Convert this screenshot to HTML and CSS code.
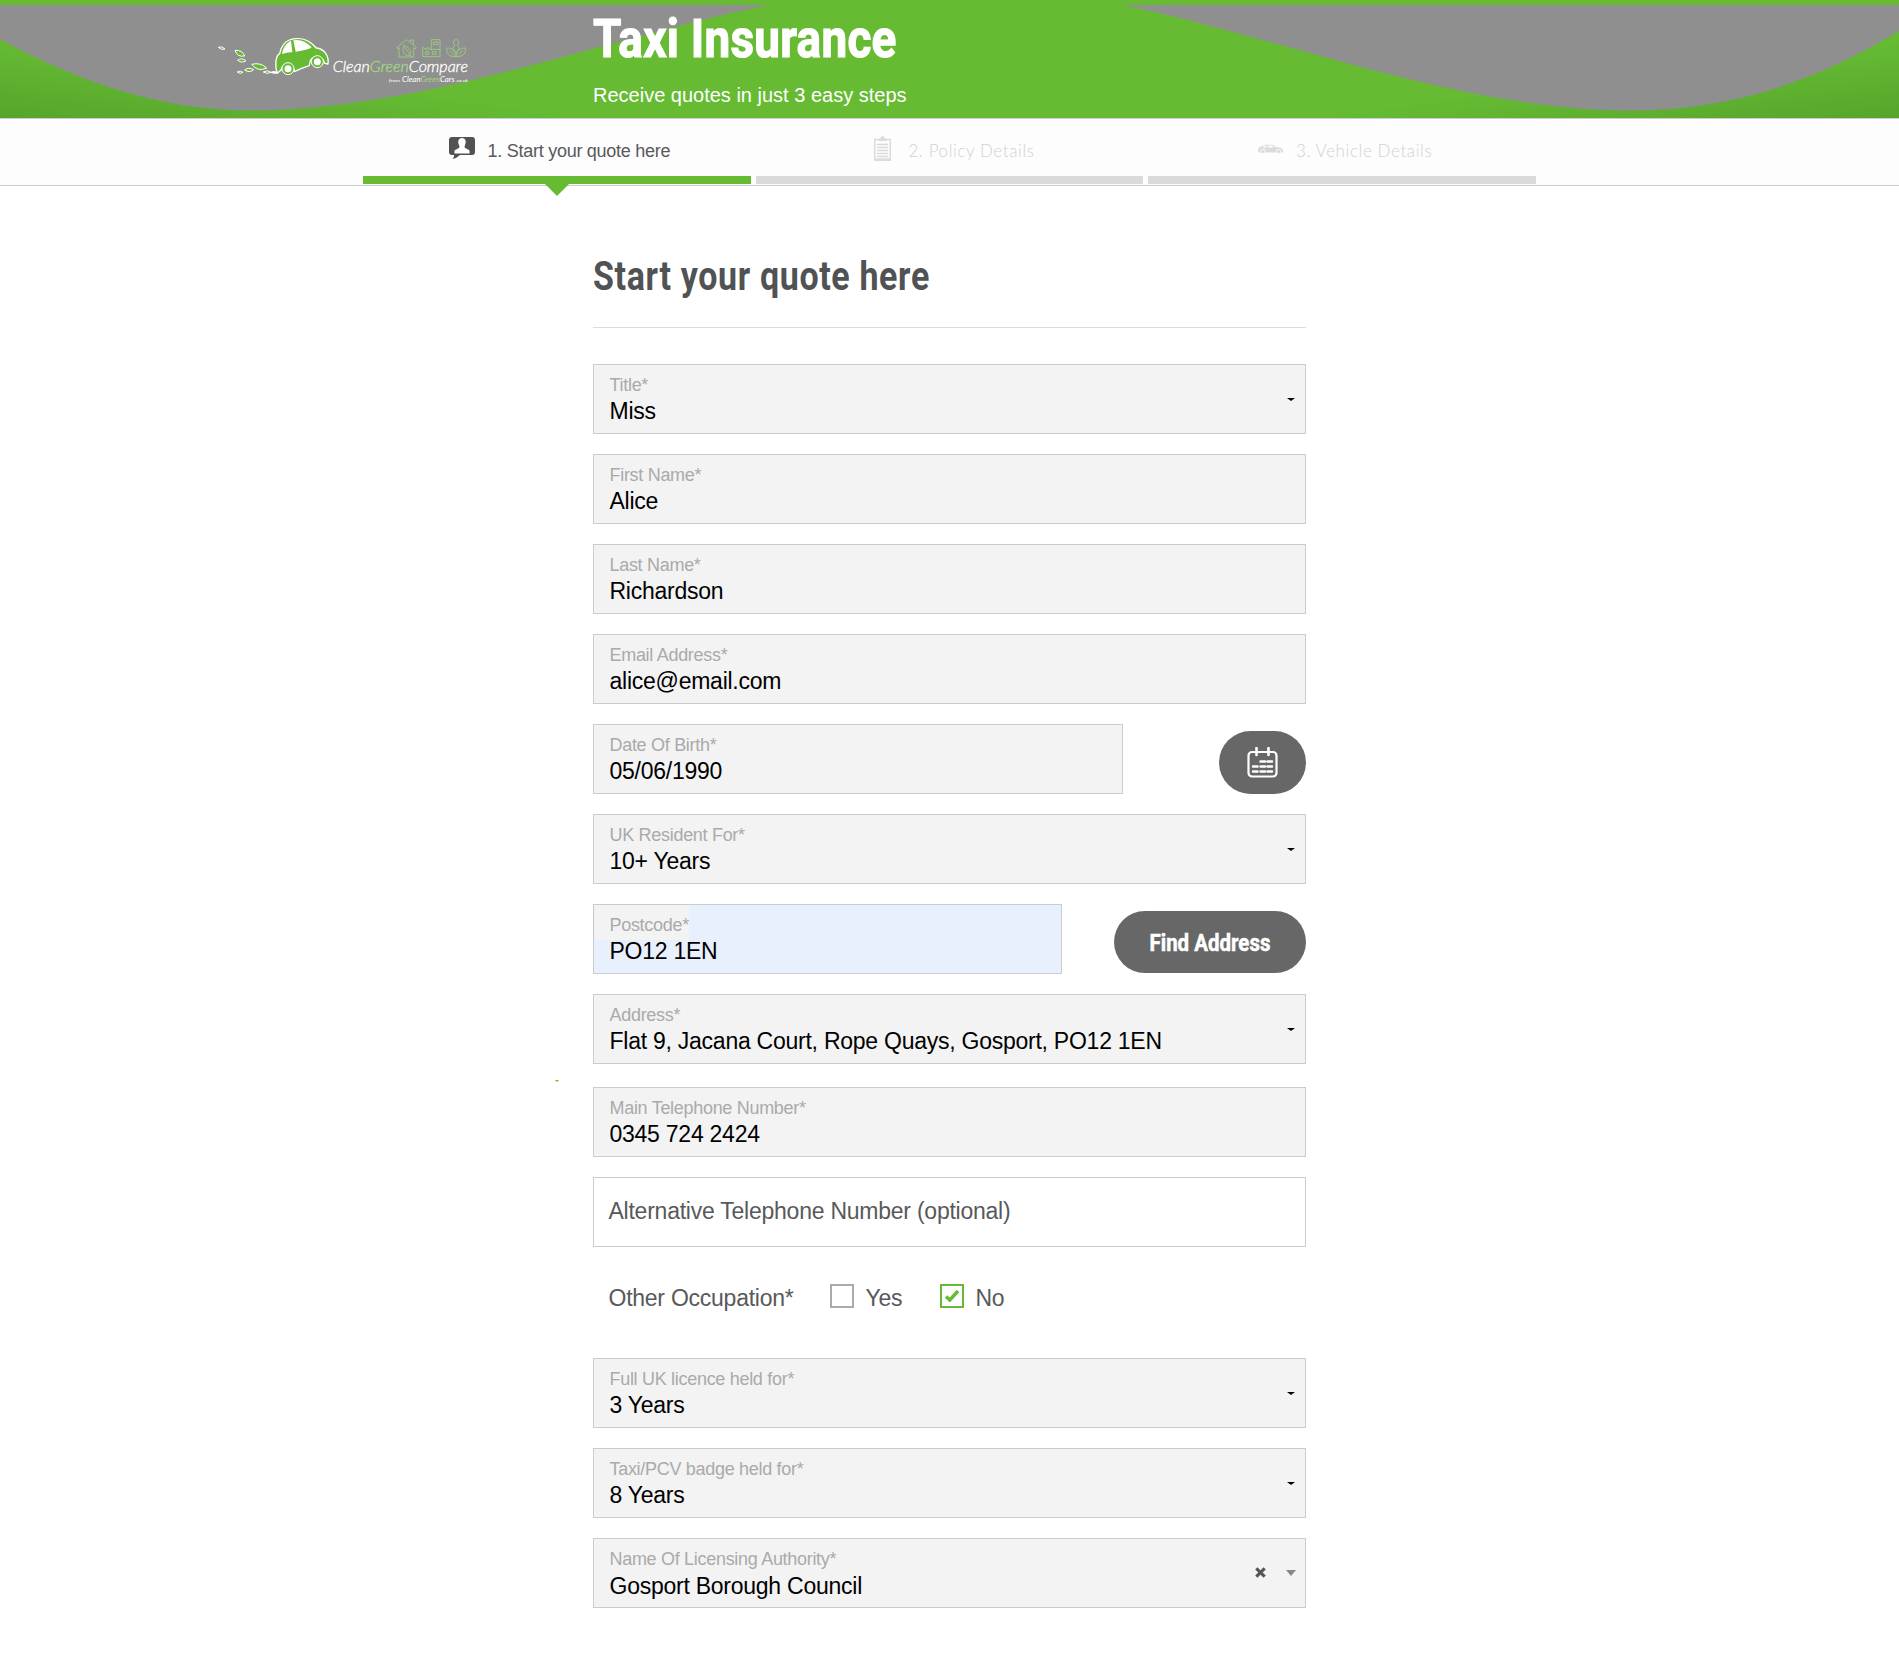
FILE: index.html
```html
<!DOCTYPE html>
<html lang="en">
<head>
<meta charset="utf-8">
<title>Taxi Insurance</title>
<link rel="stylesheet" href="styles.css">
</head>
<body>
<header class="header">
  <svg class="header-bg" viewBox="0 0 1899 118" preserveAspectRatio="none" aria-hidden="true">
    <defs>
      <linearGradient id="gl" gradientUnits="userSpaceOnUse" x1="10" y1="41" x2="0" y2="118"><stop offset="0" stop-color="#66bb33"/><stop offset="1" stop-color="#56a52b"/></linearGradient>
      <linearGradient id="gr" gradientUnits="userSpaceOnUse" x1="1889" y1="41" x2="1899" y2="118"><stop offset="0" stop-color="#66bb33"/><stop offset="1" stop-color="#56a52b"/></linearGradient>
    </defs>
    <rect width="950" height="118" fill="url(#gl)"/>
    <rect x="949" width="950" height="118" fill="url(#gr)"/>
    <path fill="#8f8f8f" d="M0 5V39.5C85 85 165 110.5 250 110.5C420 110.5 600 40 768 5Z"/>
    <path fill="#8f8f8f" d="M1123 5C1290 40 1460 110.5 1632 110.5C1730 110.5 1815 82 1899 31V5Z"/>
  </svg>
  <svg class="logo" viewBox="0 0 870 240" role="img" aria-label="CleanGreenCompare">
    <g fill="#66bb33" stroke="#fff" stroke-width="3">
      <path d="M55 82Q66 77 75 87Q64 91 55 82Z"/>
      <path d="M105 91Q128 90 134 108Q111 112 105 91Z"/>
      <path d="M113 121Q125 112 138 122Q126 131 113 121Z"/>
      <path d="M112 156Q121 150 129 157Q121 164 112 156Z"/>
      <path d="M134 150Q146 140 161 149Q149 160 134 150Z"/>
      <path d="M155 133Q181 126 200 144Q174 157 155 133Z"/>
      <path d="M190 156Q202 148 213 157Q202 164 190 156Z"/>
      <path d="M212 157Q222 151 233 158Q224 163 212 157Z" fill="#fff"/>
    </g>
    <path d="M232 160C224 138 226 108 239 101C243 82 252 66 268 60C296 50 326 58 349 84C370 86 388 105 384 132L374 130C370 110 337 104 330 125L328 137C310 143 299 147 283 155C283 130 251 122 243 150Z" fill="#66bb33" stroke="#fff" stroke-width="4" stroke-linejoin="round"/>
    <path d="M246 102Q250 73 273 62L277 96Q260 97 246 102Z M280 61Q310 56 335 82Q323 91 287 95Z" fill="#fff"/>
    <circle cx="264" cy="146" r="18" fill="#66bb33" stroke="#fff" stroke-width="3"/>
    <circle cx="264" cy="146" r="10.5" fill="#fff"/>
    <circle cx="352" cy="125" r="18" fill="#66bb33" stroke="#fff" stroke-width="3"/>
    <circle cx="352" cy="125" r="10.5" fill="#fff"/>
    <g fill="none" stroke="#9bcf80" stroke-width="2.6" stroke-linejoin="round">
      <path d="M591 82L620 59L649 82L646 87L641 83V111H597V83L594 87ZM631 66V60H640V75"/>
      <path d="M611 76C607 95 610 107 627 106C638 100 632 83 611 76ZM614 82L636 112"/>
      <path d="M668 110V82L681 90V82L694 90V59H720V110ZM700 66H714V74H700ZM677 95H686V103H677ZM697 95H708V103H697ZM694 88H720"/>
      <path d="M768 59C758 59 758 73 765 75C757 79 760 93 768 98C777 93 779 79 772 75C779 73 778 59 768 59ZM768 110C744 111 740 98 740 84C757 83 767 92 768 110ZM768 110C792 111 797 98 797 84C780 83 769 92 768 110ZM749 91L763 106M788 91L774 106"/>
    </g>
    <text class="logo-name" x="398" y="155" textLength="406" lengthAdjust="spacingAndGlyphs">Clean<tspan class="logo-green">Green</tspan>Compare</text>
    <text class="logo-small" x="566" y="186" textLength="34" lengthAdjust="spacingAndGlyphs">from</text>
    <text class="logo-sub" x="606" y="186" textLength="158" lengthAdjust="spacingAndGlyphs">Clean<tspan class="logo-green">Green</tspan>Cars</text>
    <text class="logo-small" x="767" y="186" textLength="37" lengthAdjust="spacingAndGlyphs">.co.uk</text>
  </svg>
  <div class="header-text">
    <h1 class="title">Taxi Insurance</h1>
    <p class="tagline">Receive quotes in just 3 easy steps</p>
  </div>
</header>

<nav class="steps">
  <div class="step step-active">
    <div class="step-label">
      <svg class="ico-person" viewBox="0 0 26 22"><path fill="#505254" d="M3 0H23Q26 0 26 3V15Q26 18 23 18H11Q8 21 3.500 22Q5.500 20 5 18H3Q0 18 0 15V3Q0 0 3 0Z"/><path fill="#fff" d="M13 1C17 1 17.500 5 16 8Q15 10 16 11L20 13Q21 14 20.500 16.500H5.500Q5 14 6 13L10 11Q11 10 10 8C8.500 5 9 1 13 1Z"/></svg>
      <span>1. Start your quote here</span>
    </div>
    <div class="step-bar"></div>
  </div>
  <div class="step">
    <div class="step-label">
      <svg class="ico-clip" viewBox="0 0 17 25"><path fill="none" stroke="#dadcdb" stroke-width="1.500" d="M.8 3.500H16.200V23.500H.8Z"/><path fill="#dadcdb" d="M4 5Q4 2.500 6.500 2Q7 0 8.500 0T10.500 2Q13 2.500 13 5ZM0 22.500H17V25H0Z"/><path stroke="#dadcdb" stroke-width="1.300" d="M3 8.500H14M3 11.500H14M3 14.500H14M3 17.500H14M3 20.500H14"/></svg>
      <span>2. Policy Details</span>
    </div>
    <div class="step-bar"></div>
  </div>
  <div class="step">
    <div class="step-label">
      <svg class="ico-car" viewBox="0 0 25 10"><path fill="#dadcdb" d="M0 7Q0 3 3 2.500Q7 .5 11 .5Q15 .5 18 3Q24 3.500 25 6V8.500H1Z"/><path fill="#fdfdfd" d="M4 3L8 1.500L9 3.500H5ZM10 1.300Q14 1 16 3.500H10.500Z"/><g fill="#dadcdb" stroke="#fdfdfd"><circle cx="5" cy="7.500" r="2.200"/><circle cx="20.500" cy="7.500" r="2.200"/></g></svg>
      <span>3. Vehicle Details</span>
    </div>
    <div class="step-bar"></div>
  </div>
</nav>

<main class="form">
  <h2 class="heading"><span>Start your quote here</span></h2>

  <div class="field"><label>Title*</label><div class="value">Miss</div><i class="caret"></i></div>
  <div class="field"><label>First Name*</label><div class="value">Alice</div></div>
  <div class="field"><label>Last Name*</label><div class="value">Richardson</div></div>
  <div class="field"><label>Email Address*</label><div class="value">alice@email.com</div></div>
  <div class="row">
    <div class="field field-date"><label>Date Of Birth*</label><div class="value">05/06/1990</div></div>
    <button class="btn btn-cal" aria-label="Calendar">
      <svg viewBox="0 0 31 31" width="31" height="31"><rect x="1.500" y="5" width="28" height="24.500" rx="3.500" fill="none" stroke="#fff" stroke-width="2.200"/><path d="M9.500 1V8M21.500 1V8" stroke="#fff" stroke-width="2.600" stroke-linecap="round"/><path d="M13.500 14.500H18M20.500 14.500H25M6 19.500H10.500M13.500 19.500H18M20.500 19.500H25M6 24.500H10.500M13.500 24.500H18M20.500 24.500H25" stroke="#fff" stroke-width="2.500" stroke-linecap="round"/></svg>
    </button>
  </div>
  <div class="field"><label>UK Resident For*</label><div class="value">10+ Years</div><i class="caret"></i></div>
  <div class="row">
    <div class="field field-post"><label>Postcode*</label><div class="value">PO12 1EN</div></div>
    <button class="btn btn-find"><span>Find Address</span></button>
  </div>
  <div class="field field-address"><label>Address*</label><div class="value">Flat 9, Jacana Court, Rope Quays, Gosport, PO12 1EN</div><i class="caret"></i><i class="marker"></i></div>
  <div class="field"><label>Main Telephone Number*</label><div class="value">0345 724 2424</div></div>
  <div class="field field-empty">Alternative Telephone Number (optional)</div>

  <div class="choices">
    <span class="question">Other Occupation*</span>
    <span class="choice"><i class="box"></i>Yes</span>
    <span class="choice"><i class="box box-on"><svg viewBox="0 0 16 14" width="16" height="14"><path d="M2 7.500L5.800 11L14 2" fill="none" stroke="#66bb33" stroke-width="3.400"/></svg></i>No</span>
  </div>

  <div class="field"><label>Full UK licence held for*</label><div class="value">3 Years</div><i class="caret"></i></div>
  <div class="field"><label>Taxi/PCV badge held for*</label><div class="value">8 Years</div><i class="caret"></i></div>
  <div class="field"><label>Name Of Licensing Authority*</label><div class="value value-low">Gosport Borough Council</div>
    <svg class="clear" viewBox="0 0 10 10"><path d="M1.200 1.200L8.800 8.800M8.800 1.200L1.200 8.800" stroke="#555" stroke-width="2.800"/></svg>
    <i class="caret caret-grey"></i></div>
</main>
</body>
</html>
```

FILE: styles.css
```css
* { box-sizing: border-box; }

body {
  margin: 0;
  background: #fff;
  color: #58595b;
  font-family: "Liberation Sans", Arial, sans-serif;
}

.header {
  position: relative;
  display: flex;
  height: 119px;
  border-bottom: 1px solid #ccc;
  background: #66bb33;
  overflow: hidden;
}
.header-bg { position: absolute; left: 0; top: 0; width: 100%; height: 118px; }
.logo { position: relative; width: 290px; height: 80px; margin: 20px 103px 0 200px; flex: none; }
.logo text { font-family: Lato, sans-serif; font-style: italic; fill: #fff; }
.logo-name { font-size: 46px; font-weight: 300; stroke: #fff; stroke-width: .9px; }
.logo-sub { font-size: 23px; }
.logo-small { font-size: 13px; }
.logo .logo-green { fill: #a4d886; stroke: #a4d886; }
.logo-sub .logo-green { stroke: none; }
.header-text { position: relative; color: #fff; white-space: nowrap; }
.title {
  margin: 0;
  padding-top: 7px;
  font: 700 54px/64px Roboto, sans-serif;
  letter-spacing: .3px;
  -webkit-text-stroke: 1.200px #fff;
  transform: scaleX(.85);
  transform-origin: 0 0;
}
.tagline { margin: 12px 0 0; font-size: 20px; line-height: 24px; }

.steps {
  display: flex;
  justify-content: center;
  gap: 5px;
  height: 67px;
  border-bottom: 1px solid #ccc;
  background: #fdfdfd;
}
.step {
  position: relative;
  display: flex;
  flex-direction: column;
  width: 387.600px;
  font: 300 17px/20px Lato, sans-serif;
  letter-spacing: .6px;
  color: #d0d2d2;
}
.step-label { display: flex; justify-content: center; height: 57px; padding-top: 22px; white-space: nowrap; }
.step-label svg { flex: none; }
.step-bar { height: 8px; background: #d9dbda; }
.step-active { font: 400 18px/20px "Liberation Sans", sans-serif; letter-spacing: -.26px; color: #58595b; }
.step-active .step-bar { background: #66bb33; }
.step-active::after {
  content: "";
  position: absolute;
  left: 50%;
  top: 65px;
  margin-left: -12px;
  border: 12px solid transparent;
  border-top-color: #66bb33;
  border-bottom: 0;
}
.ico-person { width: 26px; height: 22px; margin: -4px 12px 0 6px; }
.ico-clip { width: 17px; height: 25px; margin: -5px 17px 0 10px; }
.ico-car { width: 25px; height: 10px; margin: 3px 13px 0 6px; }

.form {
  display: flex;
  flex-direction: column;
  gap: 20px;
  width: 713px;
  margin: 0 auto;
  padding-bottom: 52px;
}
.heading {
  height: 142px;
  margin: 0 0 16px;
  padding-top: 67px;
  border-bottom: 1px solid #dcdcdc;
  font: 700 40px/48px Roboto, sans-serif;
  letter-spacing: .75px;
  color: #505254;
  white-space: nowrap;
}
.heading span { display: inline-block; transform: scaleX(.85); transform-origin: 0 0; }

.field {
  position: relative;
  height: 70px;
  padding: 8px 15.500px 0;
  border: 1px solid #ccc;
  background: #f3f3f3;
  white-space: nowrap;
}
.field label {
  display: block;
  font-size: 18px;
  line-height: 25px;
  letter-spacing: -.3px;
  color: #aaa;
}
.value { font-size: 23px; line-height: 27px; letter-spacing: -.25px; color: #000; }
.value-low { padding-top: 1px; }
.caret {
  position: absolute;
  right: 10px;
  top: 33px;
  border: 4px solid transparent;
  border-top: 3px solid #000;
  border-bottom: 0;
}
.caret-grey { right: 9px; top: 31px; border-width: 6px 5px 0; border-top-color: #888; }
.clear { position: absolute; right: 39px; top: 28px; width: 11px; height: 11px; }
.row { display: flex; justify-content: space-between; align-items: flex-end; }
.field-date { width: 530px; }
.field-post { width: 469px; padding: 0 1px; background: #e8effd; }
.field-post label { display: inline-block; vertical-align: top; padding: 8px 0 0 14.500px; height: 35px; background: #f3f3f3; }
.field-post .value { padding-left: 14.500px; margin-top: -2px; }
.field-address { margin-bottom: 3px; }
.marker {
  position: absolute;
  left: -39px;
  top: 85px;
  border: 2px solid transparent;
  border-top-color: #66bb33;
  border-bottom: 0;
}
.field-empty { padding: 0 14.500px; background: #fff; font-size: 23px; letter-spacing: -.24px; line-height: 66px; }

.btn {
  display: flex;
  align-items: center;
  justify-content: center;
  padding: 0;
  border: 0;
  border-radius: 32px;
  background: #676767;
  color: #fff;
}
.btn-cal { width: 87px; height: 63px; }
.btn-find { width: 192px; height: 62px; margin-bottom: 1px; padding-top: 3px; font: 700 23px/28px Roboto, sans-serif; -webkit-text-stroke: .5px #fff; white-space: nowrap; }
.btn-find span { transform: scaleX(.89); }

.choices { display: flex; align-items: center; height: 63px; padding: 1px 0 0 15.500px; margin: -1px 0 9px; font-size: 23px; letter-spacing: -.25px; }
.question { width: 221.500px; }
.choice { display: flex; align-items: center; width: 110px; }
.box {
  display: flex;
  align-items: center;
  justify-content: center;
  width: 24px;
  height: 24px;
  margin: -4px 11.500px 0 0;
  border: 2px solid #aaa;
}
.box-on { border-color: #66bb33; }
```
